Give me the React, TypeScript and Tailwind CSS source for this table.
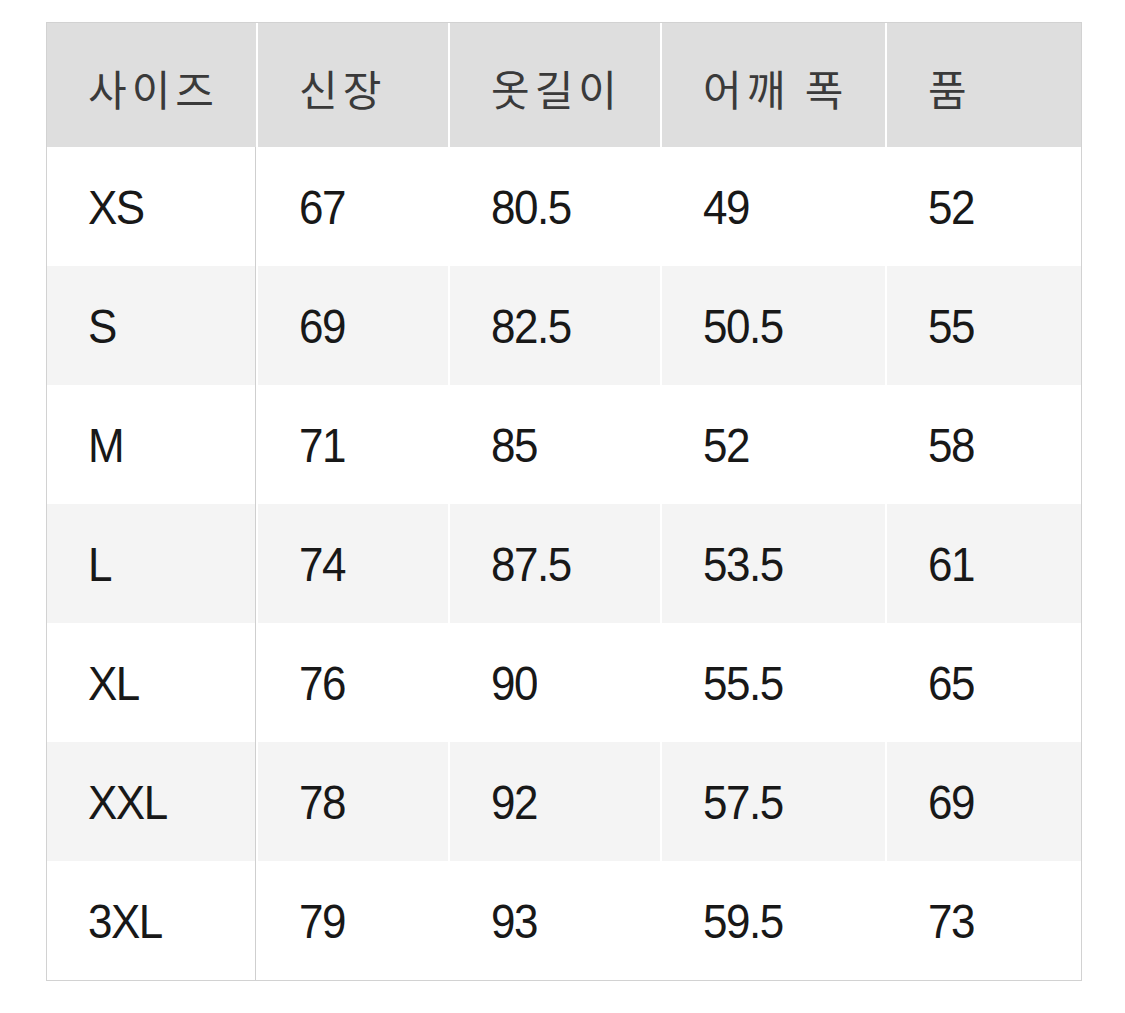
import React from "react";

const headers = ["사이즈", "신장", "옷길이", "어깨 폭", "품"];

const rows = [
  ["XS", "67", "80.5", "49", "52"],
  ["S", "69", "82.5", "50.5", "55"],
  ["M", "71", "85", "52", "58"],
  ["L", "74", "87.5", "53.5", "61"],
  ["XL", "76", "90", "55.5", "65"],
  ["XXL", "78", "92", "57.5", "69"],
  ["3XL", "79", "93", "59.5", "73"],
];

// Size chart table
const App = () => {
  return (
    <div
      className="min-h-screen bg-white pt-[22px] pl-[46px]"
      style={{ fontFamily: '"Liberation Sans", "Noto Sans CJK KR", sans-serif' }}
    >
      <div className="inline-grid grid-cols-[209px_190px_210px_223px_194px] gap-x-[2px] border border-[#d2d2d2]">
        {headers.map((h) => (
          <div
            key={h}
            className="h-[124px] bg-[#dedede] flex items-center pl-[41px] pt-[4px] text-[42px] text-[#3a3a3a] tracking-[5px]"
            style={{ fontFamily: '"Noto Sans CJK KR", sans-serif' }}
          >
            {h}
          </div>
        ))}
        {rows.map((row, i) =>
          row.map((cell, j) => (
            <div
              key={`${i}-${j}`}
              className={`h-[119px] flex items-center pl-[41px] text-[44px] text-[#181818] tracking-[-1.5px] ${
                i % 2 === 1 ? "bg-[#f4f4f4]" : "bg-white"
              } ${j === 0 ? "border-r border-[#cfcfcf]" : ""}`}
            >
              <span className="inline-block scale-y-110">{cell}</span>
            </div>
          ))
        )}
      </div>
    </div>
  );
};

export default App;
